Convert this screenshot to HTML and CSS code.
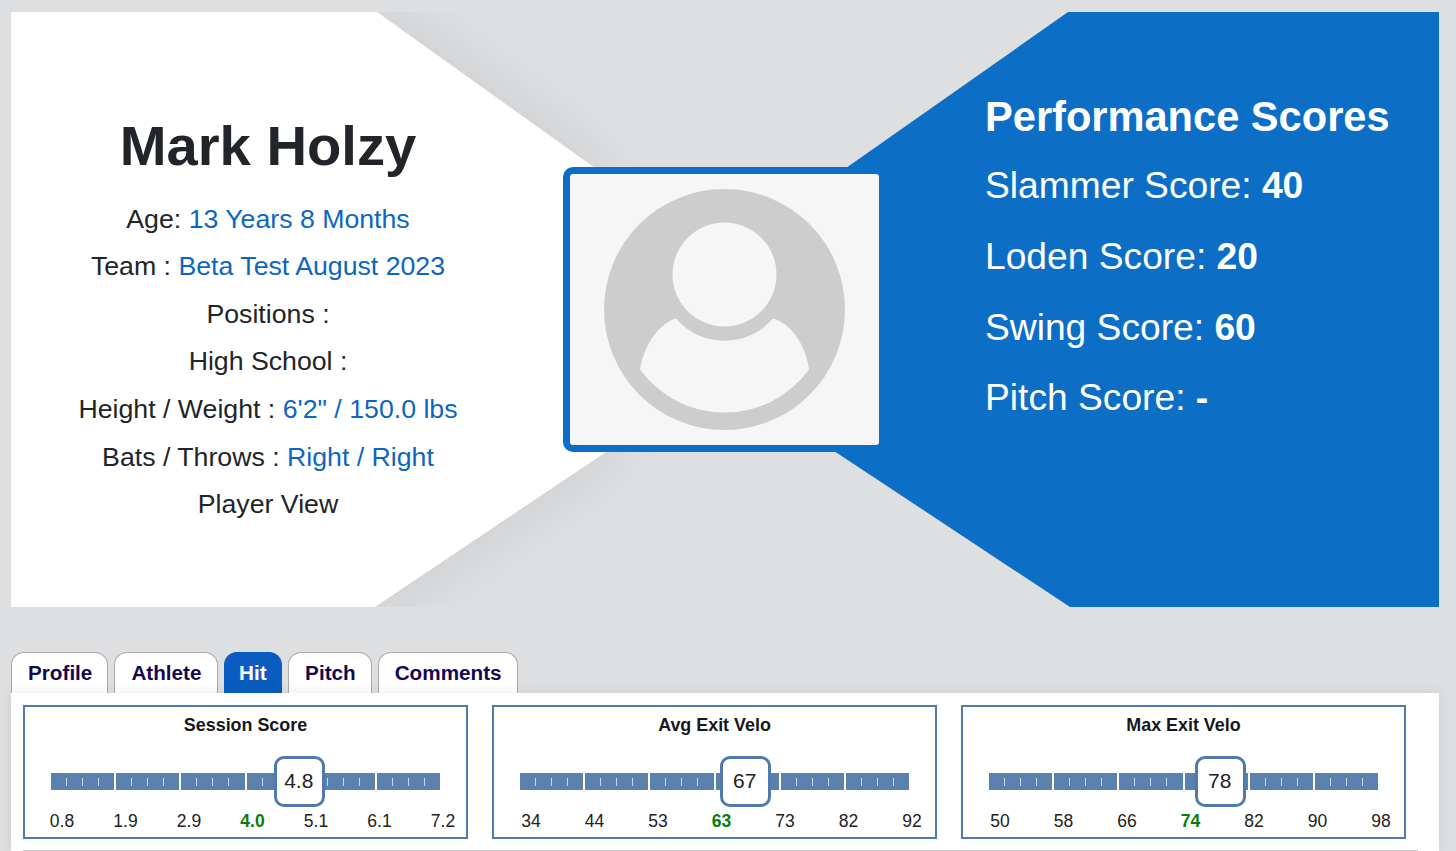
FILE: index.html
```html
<!DOCTYPE html>
<html lang="en">
<head>
  <meta charset="UTF-8">
  <meta name="viewport" content="width=device-width, initial-scale=1.0">
  <title>Mark Holzy - Player Profile</title>
  <link rel="stylesheet" href="styles.css">
</head>
<body>

<section class="banner">
  <svg class="banner-bg" width="1428" height="595" viewBox="0 0 1428 595" aria-hidden="true">
    <polygon class="shape-white" points="0,0 366,0 584,156 595,440 364,595 0,595"/>
    <polygon class="shape-blue" points="1057,0 835,156 823,439 1059,595 1428,595 1428,0"/>
  </svg>

  <div class="player-info">
    <h1>Mark Holzy</h1>
    <p>Age: <span class="val">13 Years 8 Months</span></p>
    <p>Team : <span class="val">Beta Test August 2023</span></p>
    <p>Positions :</p>
    <p>High School :</p>
    <p>Height / Weight : <span class="val">6'2" / 150.0 lbs</span></p>
    <p>Bats / Throws : <span class="val">Right / Right</span></p>
    <p>Player View</p>
  </div>

  <div class="photo">
    <svg width="309" height="271" viewBox="0 0 309 271" role="img" aria-label="Player photo placeholder">
      <circle cx="154.5" cy="135.5" r="120.5" fill="#cdcdcd"/>
      <circle cx="154.5" cy="100.5" r="52" fill="#f6f6f6"/>
      <path fill="#f6f6f6" d="M106 144.5 A64 64 0 0 0 203 144.5 C222 150 236 172 239 195.5 A104.5 104.5 0 0 1 70 195.5 C74 172 88 150 106 144.5 Z"/>
    </svg>
  </div>

  <div class="scores">
    <h2>Performance Scores</h2>
    <p>Slammer Score: <b>40</b></p>
    <p>Loden Score: <b>20</b></p>
    <p>Swing Score: <b>60</b></p>
    <p>Pitch Score: <b>-</b></p>
  </div>
</section>

<nav class="tabs">
  <a href="#">Profile</a>
  <a href="#">Athlete</a>
  <a href="#" class="active">Hit</a>
  <a href="#">Pitch</a>
  <a href="#">Comments</a>
</nav>

<section class="tab-panel">
  <div class="metric">
    <h3>Session Score</h3>
    <div class="track">
      <i></i><i></i><i></i><i></i><i></i><i></i>
      <div class="thumb" style="left: 223px">4.8</div>
    </div>
    <div class="labels">
      <span>0.8</span><span>1.9</span><span>2.9</span><span class="avg">4.0</span><span>5.1</span><span>6.1</span><span>7.2</span>
    </div>
  </div>

  <div class="metric">
    <h3>Avg Exit Velo</h3>
    <div class="track">
      <i></i><i></i><i></i><i></i><i></i><i></i>
      <div class="thumb" style="left: 200px">67</div>
    </div>
    <div class="labels">
      <span>34</span><span>44</span><span>53</span><span class="avg">63</span><span>73</span><span>82</span><span>92</span>
    </div>
  </div>

  <div class="metric">
    <h3>Max Exit Velo</h3>
    <div class="track">
      <i></i><i></i><i></i><i></i><i></i><i></i>
      <div class="thumb" style="left: 206px">78</div>
    </div>
    <div class="labels">
      <span>50</span><span>58</span><span>66</span><span class="avg">74</span><span>82</span><span>90</span><span>98</span>
    </div>
  </div>
</section>

</body>
</html>
```

FILE: styles.css
```css
/* General */
html, body {
  height: 851px;
  overflow: hidden;
}

body {
  margin: 0;
  background: #dedfe1;
  color: #212529;
  font-family: "Liberation Sans", Arial, sans-serif;
}

/* Banner */
.banner {
  position: relative;
  display: grid;
  grid-template-columns: 552px 317px 559px;
  width: 1428px;
  height: 595px;
  margin: 12px 0 0 11px;
}

.banner-bg {
  position: absolute;
  top: 0;
  left: 0;
}

.shape-white {
  fill: #fff;
  filter: drop-shadow(0 0 30px rgba(0, 0, 0, 0.09));
}

.shape-blue {
  fill: #0c6fc5;
}

.player-info {
  position: relative;
  padding: 100px 38px 0 0;
  text-align: center;
  font-size: 26.7px;
  color: #212529;
}

.player-info h1 {
  margin: 0 0 15.7px;
  font-size: 56.2px;
  line-height: 68px;
  font-weight: bold;
}

.player-info p {
  margin: 0;
  line-height: 47.6px;
}

.val {
  color: #0c66c2;
}

/* Photo */
.photo {
  position: relative;
  align-self: center;
  box-sizing: border-box;
  height: 285px;
  padding: 7px 1px 7px 7px;
  background: #0c6fc5;
  border-radius: 10px 0 0 10px;
}

.photo svg {
  display: block;
  background: #f6f6f6;
  border-radius: 3px;
}

/* Scores */
.scores {
  position: relative;
  padding: 80px 0 0 105px;
  color: #fff;
}

.scores h2 {
  margin: 0 0 8px;
  font-size: 41.6px;
  line-height: 50px;
  font-weight: bold;
}

.scores p {
  margin: 0;
  font-size: 37.2px;
  line-height: 70.8px;
}

/* Tabs */
.tabs {
  display: flex;
  gap: 6px;
  height: 41px;
  margin: 45px 0 0 11px;
}

.tabs a {
  box-sizing: border-box;
  padding: 8px 15px 0 16px;
  background: #fff;
  border: 1px solid #a9a9a9;
  border-bottom: none;
  border-radius: 13px 13px 0 0;
  color: #14094f;
  font-size: 20.7px;
  font-weight: bold;
  text-decoration: none;
}

.tabs a.active {
  padding: 8px 14.5px 0;
  background: #0a5cc0;
  border-color: #0a5cc0;
  color: #fff;
}

/* Metric cards */
.tab-panel {
  position: relative;
  display: flex;
  gap: 24px;
  box-sizing: border-box;
  width: 1428px;
  height: 158px;
  margin-left: 11px;
  padding: 12px;
  background: #fff;
  box-shadow: 0 0 14px rgba(0, 0, 0, 0.08);
}

.tab-panel::after {
  content: "";
  position: absolute;
  left: 12px;
  right: 21px;
  bottom: 0;
  height: 1.5px;
  background: #c8c8c8;
}

.metric {
  box-sizing: border-box;
  width: 445px;
  height: 134px;
  border: 2px solid #4f7aae;
}

.metric h3 {
  margin: 8px 0 0;
  color: #16181c;
  font-size: 17.9px;
  line-height: 20px;
  font-weight: bold;
  text-align: center;
}

.track {
  position: relative;
  display: flex;
  gap: 2px;
  width: 389px;
  height: 17px;
  margin: 38px 0 0 26px;
}

.track i {
  flex: 1;
  background-color: #5a80ae;
  background-image:
    linear-gradient(#cbd8e6, #cbd8e6),
    linear-gradient(#cbd8e6, #cbd8e6),
    linear-gradient(#cbd8e6, #cbd8e6);
  background-repeat: no-repeat;
  background-size: 1px 8px;
  background-position: 15px 4.5px, 31px 4.5px, 47px 4.5px;
}

.thumb {
  position: absolute;
  top: -17px;
  box-sizing: border-box;
  width: 51px;
  height: 51px;
  padding-right: 1.5px;
  background: #fff;
  border: 3.5px solid #4f7aae;
  border-radius: 10px;
  color: #222;
  font-size: 21px;
  line-height: 44px;
  text-align: center;
}

.labels {
  display: flex;
  justify-content: space-between;
  margin: 21px 7px 0 21px;
  font-size: 17.5px;
  line-height: 20px;
  color: #222;
}

.labels span {
  width: 32px;
  text-align: center;
}

.labels .avg {
  color: #0a7d0a;
  font-weight: bold;
}
```
